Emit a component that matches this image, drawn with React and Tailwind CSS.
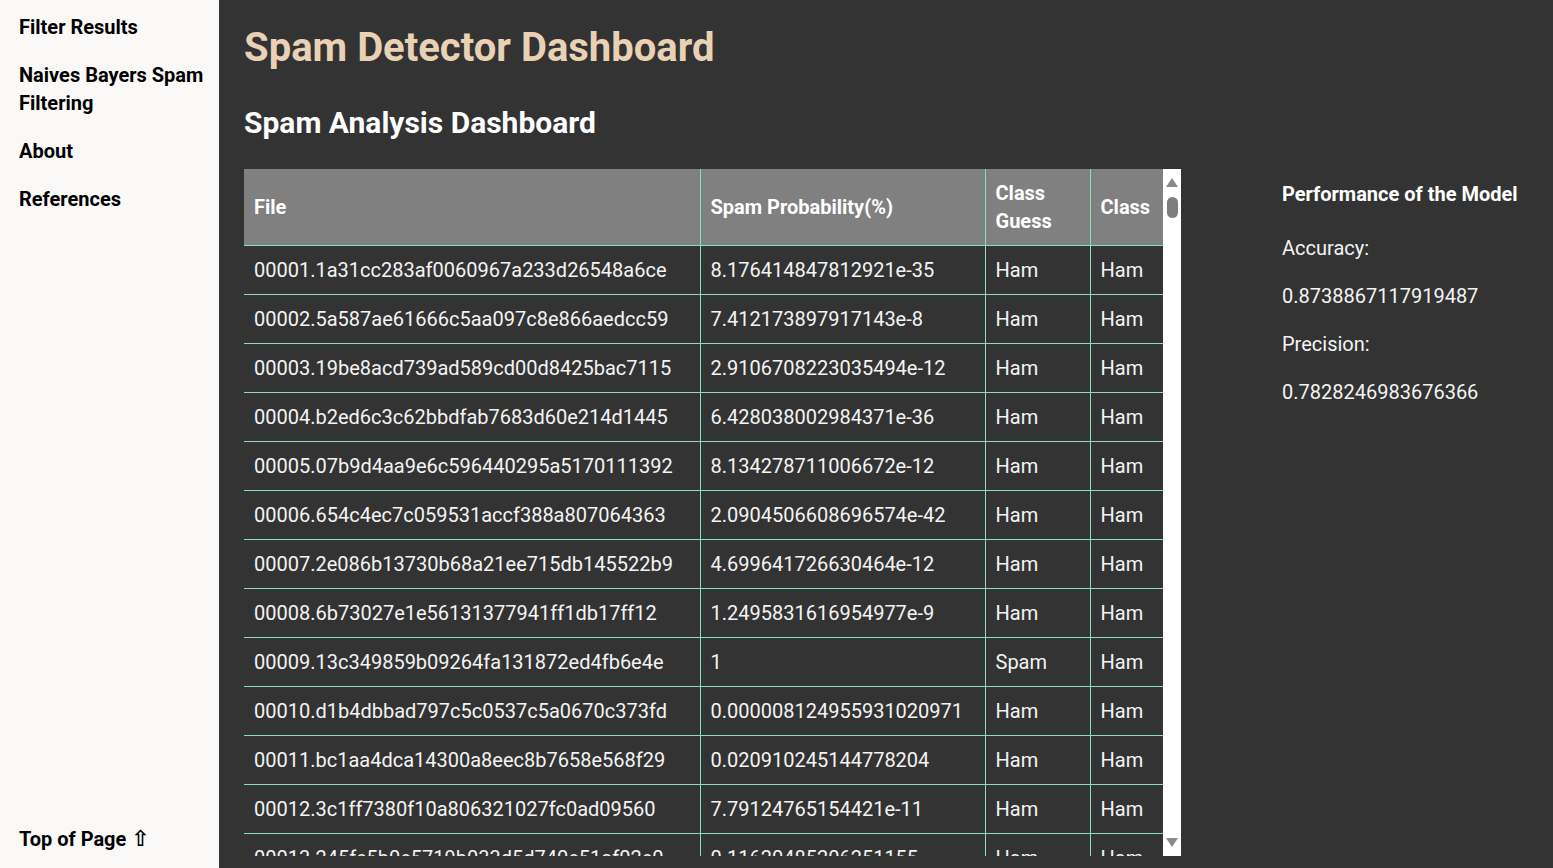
import React from 'react'

const rows = [
    ['00001.1a31cc283af0060967a233d26548a6ce', '8.176414847812921e-35', 'Ham', 'Ham'],
    ['00002.5a587ae61666c5aa097c8e866aedcc59', '7.412173897917143e-8', 'Ham', 'Ham'],
    ['00003.19be8acd739ad589cd00d8425bac7115', '2.9106708223035494e-12', 'Ham', 'Ham'],
    ['00004.b2ed6c3c62bbdfab7683d60e214d1445', '6.428038002984371e-36', 'Ham', 'Ham'],
    ['00005.07b9d4aa9e6c596440295a5170111392', '8.134278711006672e-12', 'Ham', 'Ham'],
    ['00006.654c4ec7c059531accf388a807064363', '2.0904506608696574e-42', 'Ham', 'Ham'],
    ['00007.2e086b13730b68a21ee715db145522b9', '4.699641726630464e-12', 'Ham', 'Ham'],
    ['00008.6b73027e1e56131377941ff1db17ff12', '1.2495831616954977e-9', 'Ham', 'Ham'],
    ['00009.13c349859b09264fa131872ed4fb6e4e', '1', 'Spam', 'Ham'],
    ['00010.d1b4dbbad797c5c0537c5a0670c373fd', '0.000008124955931020971', 'Ham', 'Ham'],
    ['00011.bc1aa4dca14300a8eec8b7658e568f29', '0.020910245144778204', 'Ham', 'Ham'],
    ['00012.3c1ff7380f10a806321027fc0ad09560', '7.79124765154421e-11', 'Ham', 'Ham'],
    ['00013.245fe5b0e5719b033d5d740e51af02e0', '0.11620485206251155', 'Ham', 'Ham'],
    ['00014.8e21078a89bd9c57255d302f346551e8', '2.3189754108632485e-20', 'Ham', 'Ham'],
]

const navItems = ['Filter Results', 'Naives Bayers Spam Filtering', 'About', 'References']

const Scrollbar = () => (
    <div className="w-[18px] h-full bg-white flex flex-col items-center justify-between py-[9px]">
        <div className="flex flex-col items-center">
            <svg width="12" height="9" viewBox="0 0 12 9"><path d="M6 0 L12 9 L0 9 Z" fill="#8a8a8a" /></svg>
            <div className="w-[11px] h-[21px] mt-[10px] rounded-full bg-[#7d7d7d]"></div>
        </div>
        <svg width="12" height="9" viewBox="0 0 12 9"><path d="M0 0 L12 0 L6 9 Z" fill="#8a8a8a" /></svg>
    </div>
)

const App = () => {
    return (
        <div className="flex h-[868px] w-full overflow-hidden font-['Roboto','Liberation_Sans',sans-serif]">
            <nav className="w-[219px] shrink-0 bg-[#faf9f8] flex flex-col justify-between pl-[19px] pr-[10px] pt-[13px] pb-[15px]">
                <ul className="flex flex-col gap-[20px]">
                    {navItems.map(item => (
                        <li key={item} className="text-[20px] leading-[28px] font-bold text-black">{item}</li>
                    ))}
                </ul>
                <a className="text-[20px] leading-[28px] font-bold text-black">Top of Page <span className="font-['DejaVu_Sans'] text-[22px] leading-[20px]">⇧</span></a>
            </nav>

            <main className="flex-1 bg-[#333333] pl-[25px] pt-[24px]">
                <h1 className="text-[40px] leading-[48px] font-bold text-[#e8d1b5]">Spam Detector Dashboard</h1>
                <h2 className="mt-[33px] text-[30px] leading-[35px] font-bold text-white">Spam Analysis Dashboard</h2>

                <div className="flex mt-[29px]">
                    <div className="flex h-[687px] w-[937px] overflow-hidden">
                        <div className="w-[919px] h-full overflow-hidden">
                            <table className="w-[919px] table-fixed border-collapse text-[20px] leading-[28px] text-[#f4f4f4]">
                                <colgroup>
                                    <col className="w-[456px]" />
                                    <col className="w-[285px]" />
                                    <col className="w-[105px]" />
                                    <col className="w-[73px]" />
                                </colgroup>
                                <thead className="bg-[#808080]">
                                    <tr className="border-b border-[#88dfbb]">
                                        <th className="h-[76px] px-[10px] text-left font-bold text-white border-r border-[#88dfbb]">File</th>
                                        <th className="h-[76px] px-[10px] text-left font-bold text-white border-r border-[#88dfbb]">Spam Probability(%)</th>
                                        <th className="h-[76px] px-[10px] text-left font-bold text-white border-r border-[#88dfbb]">Class Guess</th>
                                        <th className="h-[76px] px-[10px] text-left font-bold text-white border-r border-[#88dfbb]">Class</th>
                                    </tr>
                                </thead>
                                <tbody>
                                    {rows.map(r => (
                                        <tr key={r[0]} className="border-b border-[#88dfbb]">
                                            <td className="px-[10px] py-[10px] whitespace-nowrap border-r border-[#88dfbb]">{r[0]}</td>
                                            <td className="px-[10px] py-[10px] whitespace-nowrap border-r border-[#88dfbb]">{r[1]}</td>
                                            <td className="px-[10px] py-[10px] whitespace-nowrap border-r border-[#88dfbb]">{r[2]}</td>
                                            <td className="px-[10px] py-[10px] whitespace-nowrap border-r border-[#88dfbb]">{r[3]}</td>
                                        </tr>
                                    ))}
                                </tbody>
                            </table>
                        </div>
                        <Scrollbar />
                    </div>

                    <section className="pl-[101px] pt-[11px] flex flex-col gap-[20px] text-[20px] leading-[28px] text-[#f4f4f4]">
                        <h3 className="font-bold text-white mb-[6px]">Performance of the Model</h3>
                        <p>Accuracy:</p>
                        <p>0.8738867117919487</p>
                        <p>Precision:</p>
                        <p>0.7828246983676366</p>
                    </section>
                </div>
            </main>
        </div>
    )
}

export default App
